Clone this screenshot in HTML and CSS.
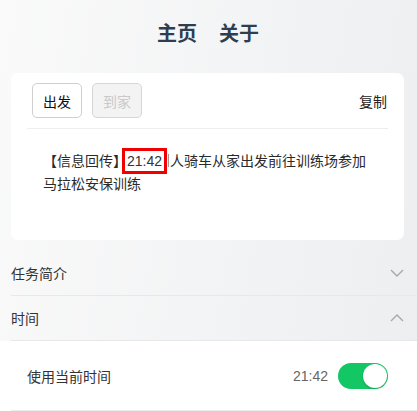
FILE: index.html
```html
<!DOCTYPE html>
<html lang="zh-CN">
<head>
<meta charset="utf-8">
<title>主页</title>
<link rel="stylesheet" href="styles.css">
</head>
<body>
<nav class="nav">
  <a class="nav-link">主页</a>
  <a class="nav-link">关于</a>
</nav>
<section class="card">
  <div class="toolbar">
    <div class="btns">
      <button class="btn">出发</button>
      <button class="btn btn-disabled">到家</button>
    </div>
    <span class="copy">复制</span>
  </div>
  <p class="message">【信息回传】<span class="time-mark">21:42</span><span class="caret"></span>人骑车从家出发前往训练场参加马拉松安保训练</p>
</section>
<section class="collapse">
  <div class="collapse-head">
    <span class="collapse-title">任务简介</span>
    <svg class="chev" width="14" height="8" viewBox="0 0 14 8"><path d="M1 1 L7 7 L13 1" fill="none" stroke="#a8a8a8" stroke-width="1.4"/></svg>
  </div>
  <div class="collapse-head">
    <span class="collapse-title">时间</span>
    <svg class="chev" width="14" height="8" viewBox="0 0 14 8"><path d="M1 7 L7 1 L13 7" fill="none" stroke="#a8a8a8" stroke-width="1.4"/></svg>
  </div>
  <div class="collapse-body">
    <div class="cell">
      <span class="cell-label">使用当前时间</span>
      <div class="cell-right">
        <span class="cell-value">21:42</span>
        <span class="switch"><span class="knob"></span></span>
      </div>
    </div>
  </div>
</section>
</body>
</html>
```
FILE: styles.css
```css
html, body {
  margin: 0;
  padding: 0;
}
body {
  width: 417px;
  min-height: 411px;
  overflow: hidden;
  background: linear-gradient(100deg, #fafafa 0%, #eceef0 100%);
  font-family: "Liberation Sans", "Noto Sans CJK SC", sans-serif;
  font-size: 14px;
  color: #333;
}
.nav {
  display: flex;
  justify-content: center;
  gap: 22px;
  padding: 18px 0 0;
  height: 55px;
  box-sizing: content-box;
  margin-left: -1px;
}
.nav-link {
  font-family: "Noto Sans CJK SC", sans-serif;
  font-weight: bold;
  font-size: 20px;
  line-height: 30px;
  color: #2c3e50;
}
.card {
  margin-left: 11px;
  width: 393px;
  height: 167px;
  box-sizing: border-box;
  background: #fff;
  border-radius: 7px;
  padding: 10px 16px 0;
}
.toolbar {
  display: flex;
  justify-content: space-between;
  align-items: center;
  padding: 0 0 10px 5px;
  border-bottom: 1px solid #eeeeee;
}
.btns {
  display: flex;
  gap: 10px;
}
.btn {
  width: 50px;
  height: 35px;
  box-sizing: border-box;
  border: 1px solid #cfcfcf;
  border-radius: 5px;
  background: #fff;
  font-family: "Noto Sans CJK SC", sans-serif;
  font-size: 14px;
  color: #111;
  padding: 0;
}
.btn-disabled {
  background: #f3f3f3;
  color: #c9c9c9;
  border-color: #d6d6d6;
}
.copy {
  font-size: 14px;
  color: #222;
  margin-right: 1px;
}
.message {
  margin: 21px 0 0;
  padding: 0 0 0 16px;
  font-size: 14px;
  line-height: 23px;
  color: #2a2a2a;
  width: 330px;
}
.time-mark {
  outline: 3px solid #f00000;
  outline-offset: 2px;
  color: #333;
}
.caret {
  display: inline-block;
  width: 1px;
  height: 13px;
  background: #999;
  margin: 0 1px 0 6px;
  vertical-align: -1px;
}
.collapse {
  margin-top: 11px;
}
.collapse-head {
  margin-left: 11px;
  height: 44px;
  display: flex;
  align-items: center;
  justify-content: space-between;
  padding-right: 13px;
  border-bottom: 1px solid #e8e8ea;
}
.collapse-title {
  font-size: 14px;
  color: #333;
}
.collapse-body {
  background: #fff;
}
.cell {
  height: 69px;
  margin-left: 11px;
  padding: 0 29px 0 16px;
  display: flex;
  align-items: center;
  justify-content: space-between;
  border-bottom: 2px solid #ececee;
}
.cell-label {
  color: #333;
}
.cell-right {
  display: flex;
  align-items: center;
  gap: 10px;
}
.cell-value {
  color: #666;
  font-size: 14px;
}
.switch {
  width: 50px;
  height: 26px;
  border-radius: 13px;
  background: #13c764;
  display: flex;
  align-items: center;
  justify-content: flex-end;
  padding: 1px;
  box-sizing: border-box;
}
.knob {
  width: 24px;
  height: 24px;
  border-radius: 50%;
  background: #fff;
  box-shadow: 0 1px 2px rgba(0,0,0,0.2);
}
```
